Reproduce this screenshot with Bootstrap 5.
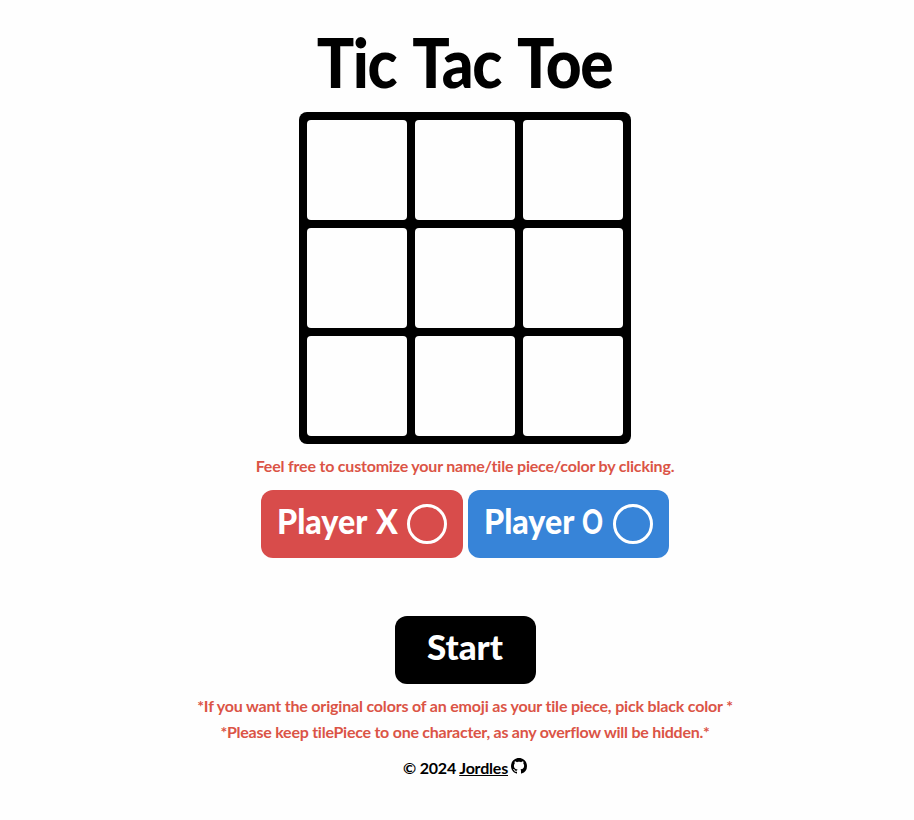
<!DOCTYPE html>
<html lang="en">
<head>
<meta charset="utf-8">
<meta name="viewport" content="width=device-width, initial-scale=1">
<title>Tic Tac Toe</title>
<link href="https://cdn.jsdelivr.net/npm/bootstrap@5.3.0/dist/css/bootstrap.min.css" rel="stylesheet">
<style>
body { background: #fefefe; color: #000; font-family: Lato, "Open Sans", sans-serif; font-weight: 700; white-space: nowrap; overflow: hidden; font-variant-ligatures: none; }
.page-title { font-size: 68px; font-weight: 900; line-height: 80px; padding-top: 22px; margin-bottom: 10px; letter-spacing: -1.5px; word-spacing: 5px; }
.page-title span { display: inline-block; transform: scaleX(.915); }
.board { display: grid; grid-template-columns: repeat(3, 100px); grid-auto-rows: 100px; gap: 8px; padding: 8px; border-radius: 8px; background: #000; }
.tile { background: #fefefe; border: 0; border-radius: 4px; padding: 0; }
.hint { color: #db5446; font-size: 16px; line-height: 26px; }
.hint-top { margin-top: 9px; letter-spacing: -.2px; }
.players { margin-top: 11px; gap: 5px; }
.game-btn { height: 68px; border: 0; border-radius: 12px; color: #fff; font-size: 35px; font-weight: 900; line-height: 60px; padding: 0 16px; }
.player-x { width: 202px; background: #d84c4b; }
.player-o { width: 201px; background: #3784d8; }
.player-name { width: 89px; height: 68px; }
.player-name span, .player-mark span { display: inline-block; transform: scaleX(.92); transform-origin: left; }
.player-mark { width: 21px; height: 68px; margin-left: 10px; margin-right: 10px; }
.player-o .player-mark { margin-left: 9px; }
.player-o .player-mark span { transform: scaleX(.74); }
.ring { width: 40px; height: 40px; border: 3px solid #fff; border-radius: 50%; }
.start { width: 141px; margin-top: 58px; padding-bottom: 8px; background: #000; }
.notes { margin-top: 9px; }
.note-a { letter-spacing: -.18px; }
.note-b { letter-spacing: -.25px; }
.credit { margin-top: 10px; gap: 3px; font-size: 16px; line-height: 26px; letter-spacing: -.2px; }
.credit svg { margin-top: 3px; }
</style>
<script src="https://cdn.jsdelivr.net/npm/bootstrap@5.3.0/dist/js/bootstrap.bundle.min.js"></script>
</head>
<body>
<main class="d-flex flex-column align-items-center ps-3">
  <h1 class="page-title"><span>Tic Tac Toe</span></h1>
  <div class="board">
    <button class="tile"></button><button class="tile"></button><button class="tile"></button>
    <button class="tile"></button><button class="tile"></button><button class="tile"></button>
    <button class="tile"></button><button class="tile"></button><button class="tile"></button>
  </div>
  <div class="hint hint-top">Feel free to customize your name/tile piece/color by clicking.</div>
  <div class="players d-flex">
    <button class="game-btn player-x d-flex align-items-center"><span class="player-name text-start"><span>Player</span></span><span class="player-mark text-start"><span>X</span></span><span class="ring flex-shrink-0"></span></button>
    <button class="game-btn player-o d-flex align-items-center"><span class="player-name text-start"><span>Player</span></span><span class="player-mark text-start"><span>O</span></span><span class="ring flex-shrink-0"></span></button>
  </div>
  <button class="game-btn start">Start</button>
  <div class="notes hint text-center">
    <div class="note-a">*If you want the original colors of an emoji as your tile piece, pick black color *</div>
    <div class="note-b">*Please keep tilePiece to one character, as any overflow will be hidden.*</div>
  </div>
  <footer class="credit d-flex">
    <span>© 2024 <a href="#" class="text-reset text-decoration-underline">Jordles</a></span>
    <svg width="16" height="16" viewBox="0 0 16 16" aria-hidden="true"><path d="M8 0C3.58 0 0 3.58 0 8c0 3.54 2.29 6.53 5.47 7.59.4.07.55-.17.55-.38 0-.19-.01-.82-.01-1.49-2.01.37-2.53-.49-2.69-.94-.09-.23-.48-.94-.82-1.13-.28-.15-.68-.52-.01-.53.63-.01 1.08.58 1.23.82.72 1.21 1.87.87 2.33.66.07-.52.28-.87.51-1.07-1.78-.2-3.64-.89-3.64-3.95 0-.87.31-1.59.82-2.15-.08-.2-.36-1.02.08-2.12 0 0 .67-.21 2.2.82.64-.18 1.32-.27 2-.27s1.36.09 2 .27c1.53-1.04 2.2-.82 2.2-.82.44 1.1.16 1.92.08 2.12.51.56.82 1.27.82 2.15 0 3.07-1.87 3.75-3.65 3.95.29.25.54.73.54 1.48 0 1.07-.01 1.93-.01 2.2 0 .21.15.46.55.38A8.01 8.01 0 0 0 16 8c0-4.42-3.58-8-8-8Z"/></svg>
  </footer>
</main>
</body>
</html>
